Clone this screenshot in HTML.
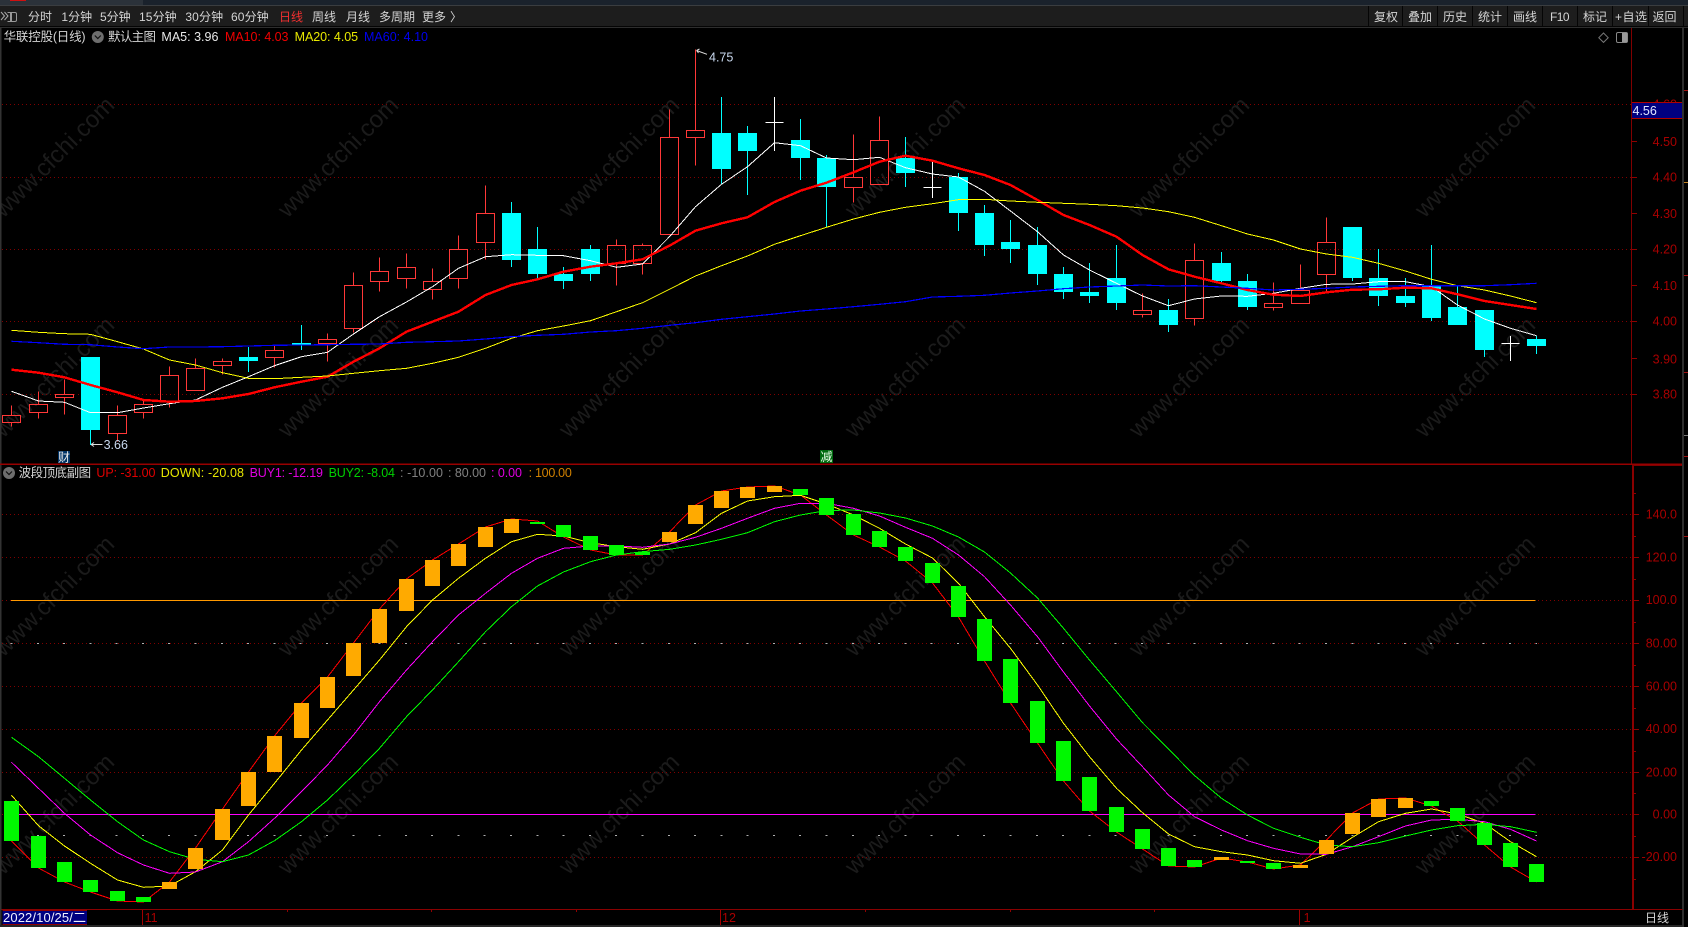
<!DOCTYPE html>
<html><head><meta charset="utf-8"><title>K</title>
<style>html,body{margin:0;padding:0;background:#000;width:1688px;height:927px;overflow:hidden}svg{display:block}text{font-family:"Liberation Sans","Noto Sans CJK SC",sans-serif;font-size:12.5px}.t{font-size:12px;fill:#d4d4d4}.w{font-size:24px;fill:#1b1b1b;text-anchor:middle}.a{fill:#a80000;text-anchor:end;font-size:12.5px}</style></head><body>
<svg width="1688" height="927" viewBox="0 0 1688 927" xmlns="http://www.w3.org/2000/svg" shape-rendering="crispEdges">
<rect width="1688" height="927" fill="#000"/>
<!-- title bar + toolbar -->
<rect width="1688" height="5" fill="#1a222c"/><rect width="143" height="5" fill="#2b323a"/><rect x="10" width="16" height="1" fill="#d01010"/>
<rect y="5" width="1688" height="1" fill="#3a3d40"/><rect y="6" width="1688" height="21" fill="#1d1d1d"/><rect y="26" width="1688" height="1" fill="#050505"/><rect y="27" width="1688" height="1" fill="#2e2e2e"/>
<path d="M1368.5 6V26M1402.5 6V26M1437.5 6V26M1472.5 6V26M1507.5 6V26M1542.5 6V26M1577.5 6V26M1612.5 6V26M1648.5 6V26M1683.5 6V26" stroke="#050505" fill="none"/>
<g shape-rendering="auto"><path d="M7.5 12.5H15a1.5 1.5 0 0 1 1.5 1.5V20a1.5 1.5 0 0 1-1.5 1.5H7.5" fill="none" stroke="#999"/><rect x="10" y="13" width="2" height="8" fill="#999"/><path d="M1 12l3.5 4-3.5 4M4.5 12l3.5 4-3.5 4" fill="none" stroke="#aaa"/></g>
<g class="x">
<text class="t" x="28" y="21" textLength="24">分时</text><text class="t" x="61.4" y="21" textLength="30.7">1分钟</text><text class="t" x="100" y="21" textLength="30.7">5分钟</text><text class="t" x="139" y="21" textLength="37.7">15分钟</text><text class="t" x="185.4" y="21" textLength="37.7">30分钟</text><text class="t" x="231" y="21" textLength="37.7">60分钟</text><text class="t" x="279" y="21" textLength="24" style="fill:#f03030">日线</text><text class="t" x="312" y="21" textLength="24">周线</text><text class="t" x="346" y="21" textLength="24">月线</text><text class="t" x="379" y="21" textLength="36">多周期</text><text class="t" x="422" y="21" textLength="24">更多</text><text class="t" x="450" y="21">〉</text>
<text class="t" x="1374" y="21" textLength="24">复权</text><text class="t" x="1408" y="21" textLength="24">叠加</text><text class="t" x="1443" y="21" textLength="24">历史</text><text class="t" x="1478" y="21" textLength="24">统计</text><text class="t" x="1513" y="21" textLength="24">画线</text><text class="t" x="1550" y="21" textLength="19.6">F10</text><text class="t" x="1583" y="21" textLength="24">标记</text><text class="t" x="1615" y="21" textLength="32">+自选</text><text class="t" x="1652.5" y="21" textLength="24">返回</text>
</g>
<!-- watermark -->
<g shape-rendering="auto">
<text class="w" x="54" y="165" transform="rotate(-45 54 157)">www.cfchi.com</text><text class="w" x="338" y="165" transform="rotate(-45 338 157)">www.cfchi.com</text><text class="w" x="619" y="165" transform="rotate(-45 619 157)">www.cfchi.com</text><text class="w" x="905" y="165" transform="rotate(-45 905 157)">www.cfchi.com</text><text class="w" x="1189" y="165" transform="rotate(-45 1189 157)">www.cfchi.com</text><text class="w" x="1475" y="165" transform="rotate(-45 1475 157)">www.cfchi.com</text>
<text class="w" x="54" y="385" transform="rotate(-45 54 377)">www.cfchi.com</text><text class="w" x="338" y="385" transform="rotate(-45 338 377)">www.cfchi.com</text><text class="w" x="619" y="385" transform="rotate(-45 619 377)">www.cfchi.com</text><text class="w" x="905" y="385" transform="rotate(-45 905 377)">www.cfchi.com</text><text class="w" x="1189" y="385" transform="rotate(-45 1189 377)">www.cfchi.com</text><text class="w" x="1475" y="385" transform="rotate(-45 1475 377)">www.cfchi.com</text>
<text class="w" x="54" y="604" transform="rotate(-45 54 596)">www.cfchi.com</text><text class="w" x="338" y="604" transform="rotate(-45 338 596)">www.cfchi.com</text><text class="w" x="619" y="604" transform="rotate(-45 619 596)">www.cfchi.com</text><text class="w" x="905" y="604" transform="rotate(-45 905 596)">www.cfchi.com</text><text class="w" x="1189" y="604" transform="rotate(-45 1189 596)">www.cfchi.com</text><text class="w" x="1475" y="604" transform="rotate(-45 1475 596)">www.cfchi.com</text>
<text class="w" x="54" y="822" transform="rotate(-45 54 814)">www.cfchi.com</text><text class="w" x="338" y="822" transform="rotate(-45 338 814)">www.cfchi.com</text><text class="w" x="619" y="822" transform="rotate(-45 619 814)">www.cfchi.com</text><text class="w" x="905" y="822" transform="rotate(-45 905 814)">www.cfchi.com</text><text class="w" x="1189" y="822" transform="rotate(-45 1189 814)">www.cfchi.com</text><text class="w" x="1475" y="822" transform="rotate(-45 1475 814)">www.cfchi.com</text>
</g>
<!-- grid -->
<path d="M2 104.5H1631M2 177.5H1631M2 249.5H1631M2 321.5H1631M2 394.5H1631M2 514.5H1631M2 557.5H1631M2 600.5H1631M2 643.5H1631M2 686.5H1631M2 729.5H1631M2 772.5H1631M2 814.5H1631M2 857.5H1631" stroke="#800000" stroke-dasharray="1 3" fill="none"/>
<!-- frame -->
<rect x="0" y="28" width="1.5" height="899" fill="#333"/>
<rect x="1682" y="28" width="2" height="899" fill="#2e2e2e"/>
<path d="M1631.5 28V464" stroke="#800000"/>
<rect x="1632" y="464" width="2" height="445" fill="#8a0000"/>
<rect x="0" y="463.5" width="1682" height="1.5" fill="#980000"/>
<rect x="1632" y="465" width="50" height="1" fill="#800000"/>
<rect x="1.5" y="909" width="1681" height="1" fill="#8a0000"/>
<path d="M1632 104.5h5M1632 141.5h5M1632 177.5h5M1632 213.5h5M1632 249.5h5M1632 285.5h5M1632 321.5h5M1632 358.5h5M1632 394.5h5" stroke="#900000" fill="none"/>
<path d="M1634 514.5h5M1634 557.5h5M1634 600.5h5M1634 643.5h5M1634 686.5h5M1634 729.5h5M1634 772.5h5M1634 814.5h5M1634 857.5h5M1634 536.5h2M1634 579.5h2M1634 622.5h2M1634 665.5h2M1634 708.5h2M1634 751.5h2M1634 793.5h2M1634 836.5h2M1634 879.5h2M1634 493.5h2" stroke="#900000" fill="none"/>
<path d="M1684 90.5h4M1684 275.5h4M1684 372.5h4M1684 456.5h4M1684 536.5h4" stroke="#a01010" fill="none"/><path d="M1684 182.5h4" stroke="#c08020"/><path d="M1684 435.5h4" stroke="#777"/>
<!-- axis labels -->
<text class="a" x="1677" y="108.5">4.60</text><text class="a" x="1677" y="146">4.50</text><text class="a" x="1677" y="181.5">4.40</text><text class="a" x="1677" y="218">4.30</text><text class="a" x="1677" y="253.5">4.20</text><text class="a" x="1677" y="290">4.10</text><text class="a" x="1677" y="325.5">4.00</text><text class="a" x="1677" y="363.5">3.90</text><text class="a" x="1677" y="398.7">3.80</text>
<text class="a" x="1677" y="518.5">140.0</text><text class="a" x="1677" y="561.5">120.0</text><text class="a" x="1677" y="604">100.0</text><text class="a" x="1677" y="647.5">80.00</text><text class="a" x="1677" y="690.5">60.00</text><text class="a" x="1677" y="733">40.00</text><text class="a" x="1677" y="776.5">20.00</text><text class="a" x="1677" y="818.5">0.00</text><text class="a" x="1677" y="861">-20.00</text>
<rect x="1632" y="103" width="50" height="15.5" fill="#000080"/><path d="M1632 102.5h50M1632 118.5h50" stroke="#b00000"/>
<text x="1632.5" y="115" style="fill:#dfe6ff">4.56</text>
<!-- main title -->
<text x="3.6" y="41" textLength="82" style="fill:#d4d4d4">华联控股(日线)</text>
<g shape-rendering="auto"><circle cx="97.8" cy="37" r="6" fill="#6e6e6e"/><path d="M94.8 35.5l3 3 3-3" fill="none" stroke="#111" stroke-width="1.2"/></g>
<text x="108" y="41" textLength="48" style="fill:#d4d4d4">默认主图</text>
<text x="161.4" y="41" textLength="57" style="fill:#e8e8e8">MA5: 3.96</text>
<text x="225" y="41" textLength="63.5" style="fill:#f00000">MA10: 4.03</text>
<text x="294.6" y="41" textLength="63.5" style="fill:#e8e800">MA20: 4.05</text>
<text x="364" y="41" textLength="64" style="fill:#0000f0">MA60: 4.10</text>
<g shape-rendering="auto"><path d="M1603.5 33l4.7 4.7-4.7 4.7-4.7-4.7z" fill="none" stroke="#777"/><rect x="1616.5" y="32.5" width="11" height="10" rx="1.5" fill="none" stroke="#888"/><rect x="1622" y="33" width="5" height="9" fill="#999"/></g>
<!-- candles: red -->
<path fill="none" stroke="#ff3838" d="M11.5 405.5V415.5M11.5 422.5V426.5M2.5 415.5H20.5V422.5H2.5ZM38.5 391.5V404.5M38.5 412.5V418.5M29.5 404.5H47.5V412.5H29.5ZM64.5 379.5V394.5M64.5 397.5V414.5M55.5 394.5H73.5V397.5H55.5ZM117.5 405.5V415.5M117.5 433.5V441.5M108.5 415.5H126.5V433.5H108.5ZM143.5 400.5V404.5M143.5 412.5V418.5M134.5 404.5H152.5V412.5H134.5ZM169.5 366.5V375.5M169.5 401.5V407.5M160.5 375.5H178.5V401.5H160.5ZM195.5 358.5V368.5M186.5 368.5H204.5V390.5H186.5ZM222.5 358.5V361.5M222.5 365.5V374.5M213.5 361.5H231.5V365.5H213.5ZM274.5 344.5V350.5M274.5 357.5V367.5M265.5 350.5H283.5V357.5H265.5ZM327.5 333.5V339.5M327.5 343.5V361.5M318.5 339.5H336.5V343.5H318.5ZM353.5 272.5V285.5M353.5 328.5V332.5M344.5 285.5H362.5V328.5H344.5ZM379.5 257.5V271.5M379.5 281.5V291.5M370.5 271.5H388.5V281.5H370.5ZM406.5 253.5V267.5M406.5 278.5V288.5M397.5 267.5H415.5V278.5H397.5ZM432.5 268.5V281.5M432.5 289.5V299.5M423.5 281.5H441.5V289.5H423.5ZM458.5 235.5V249.5M458.5 278.5V288.5M449.5 249.5H467.5V278.5H449.5ZM485.5 185.5V213.5M485.5 242.5V259.5M476.5 213.5H494.5V242.5H476.5ZM616.5 239.5V245.5M616.5 263.5V285.5M607.5 245.5H625.5V263.5H607.5ZM642.5 243.5V245.5M642.5 263.5V274.5M633.5 245.5H651.5V263.5H633.5ZM669.5 109.5V137.5M660.5 137.5H678.5V234.5H660.5ZM695.5 49.5V130.5M695.5 137.5V165.5M686.5 130.5H704.5V137.5H686.5ZM853.5 134.5V177.5M853.5 187.5V202.5M844.5 177.5H862.5V187.5H844.5ZM879.5 116.5V140.5M870.5 140.5H888.5V184.5H870.5ZM1142.5 293.5V310.5M1142.5 314.5V317.5M1133.5 310.5H1151.5V314.5H1133.5ZM1194.5 243.5V260.5M1194.5 318.5V325.5M1185.5 260.5H1203.5V318.5H1185.5ZM1273.5 282.5V303.5M1273.5 307.5V310.5M1264.5 303.5H1282.5V307.5H1264.5ZM1300.5 264.5V290.5M1291.5 290.5H1309.5V303.5H1291.5ZM1326.5 217.5V242.5M1326.5 274.5V293.5M1317.5 242.5H1335.5V274.5H1317.5Z"/>
<!-- candles: cyan wicks -->
<path fill="none" stroke="#00ffff" d="M90.5 357V445M248.5 347V372M301.5 325V350M511.5 202V267M537.5 227V278M563.5 267V289M590.5 245V281M721.5 97V184M747.5 126V195M800.5 119V180M826.5 155V227M905.5 137V187M958.5 173V231M984.5 205V256M1010.5 220V263M1037.5 227V285M1063.5 267V299M1089.5 263V303M1116.5 245V310M1168.5 299V332M1221.5 252V283M1247.5 274V310M1352.5 227V281M1378.5 249V306M1405.5 278V307M1431.5 245V321M1457.5 286V325M1484.5 310V357M1536.5 336V354"/>
<path fill="#00ffff" d="M81 357h19v73h-19zM239 357h19v4h-19zM292 343h19v2h-19zM502 213h19v47h-19zM528 249h19v25h-19zM554 274h19v7h-19zM581 249h19v25h-19zM712 133h19v36h-19zM738 133h19v18h-19zM791 140h19v18h-19zM817 158h19v29h-19zM896 158h19v15h-19zM949 177h19v36h-19zM975 213h19v32h-19zM1001 242h19v7h-19zM1028 245h19v29h-19zM1054 274h19v18h-19zM1080 292h19v4h-19zM1107 278h19v25h-19zM1159 310h19v15h-19zM1212 263h19v18h-19zM1238 281h19v26h-19zM1343 227h19v51h-19zM1369 278h19v18h-19zM1396 296h19v7h-19zM1422 286h19v32h-19zM1448 307h19v18h-19zM1475 310h19v40h-19zM1527 339h19v7h-19z"/>
<path fill="none" stroke="#fff" d="M774.5 97V151M765.5 122.5H783.5M932.5 162V198M923.5 187.5H941.5M1510.5 336V361M1501.5 343.5H1519.5"/>
<!-- MAs -->
<polyline fill="none" stroke="#fff" stroke-width="1" points="11.5,391.3 38.5,401 64.5,402.3 90.5,412.7 117.5,412.7 143.5,408 169.5,403.7 195.5,400 222.5,387.3 248.5,376.7 274.5,365.7 301.5,356.7 327.5,352.3 353.5,334 379.5,316.7 406.5,302 432.5,286.7 458.5,268.3 485.5,256.7 511.5,254.7 537.5,255.3 563.5,255.7 590.5,260.7 616.5,267.3 642.5,264 669.5,236.7 695.5,206.7 721.5,184.3 747.5,166.7 774.5,142.7 800.5,145.7 826.5,158 853.5,159.7 879.5,157.3 905.5,167.7 932.5,174 958.5,177 984.5,191.3 1010.5,211 1037.5,231.7 1063.5,255 1089.5,270 1116.5,283.3 1142.5,296 1168.5,305.7 1194.5,299 1221.5,296 1247.5,296.3 1273.5,293.3 1300.5,288.3 1326.5,284.3 1352.5,284 1378.5,281.7 1405.5,281.7 1431.5,286.7 1457.5,305 1484.5,319 1510.5,328.3 1536.5,335.7"/>
<polyline fill="none" stroke="#ff0000" stroke-width="2.4" points="11.5,369.7 38.5,372.7 64.5,377.3 90.5,385 117.5,392.3 143.5,400 169.5,401.7 195.5,401 222.5,398.3 248.5,394 274.5,387.3 301.5,381.7 327.5,376.7 353.5,361.7 379.5,348.3 406.5,331.7 432.5,321.7 458.5,311.7 485.5,295 511.5,285 537.5,279.3 563.5,271.7 590.5,266.7 616.5,263.3 642.5,259.3 669.5,245.7 695.5,230.7 721.5,223.3 747.5,217.3 774.5,202 800.5,190.7 826.5,182.7 853.5,172.3 879.5,161.7 905.5,155.7 932.5,160.7 958.5,168.3 984.5,175 1010.5,185 1037.5,200 1063.5,215 1089.5,225 1116.5,236.7 1142.5,255 1168.5,269.3 1194.5,276.7 1221.5,283.3 1247.5,290 1273.5,294.7 1300.5,296 1326.5,292.3 1352.5,289.7 1378.5,289.3 1405.5,287.7 1431.5,288.3 1457.5,294.3 1484.5,301 1510.5,305 1536.5,309"/>
<polyline fill="none" stroke="#ffff00" stroke-width="1" points="11.5,330.3 38.5,332.3 64.5,333.7 90.5,334.3 117.5,341.7 143.5,349 169.5,360 195.5,365 222.5,372.7 248.5,378.3 274.5,378.7 301.5,377.3 327.5,376 353.5,373.3 379.5,370.7 406.5,368.3 432.5,363.3 458.5,357.3 485.5,348.3 511.5,338.3 537.5,330.7 563.5,326 590.5,320.7 616.5,311.7 642.5,302.7 669.5,289.3 695.5,276 721.5,265.7 747.5,256 774.5,244.3 800.5,235.7 826.5,227.3 853.5,219 879.5,212.3 905.5,207.3 932.5,203.7 958.5,199.7 984.5,199.3 1010.5,201 1037.5,202.3 1063.5,203.3 1089.5,204.3 1116.5,205.7 1142.5,208 1168.5,211.7 1194.5,217.3 1221.5,225.7 1247.5,234 1273.5,240 1300.5,249 1326.5,254 1352.5,257.3 1378.5,263.3 1405.5,271 1431.5,279.3 1457.5,285.7 1484.5,290 1510.5,296 1536.5,302.7"/>
<polyline fill="none" stroke="#0000ff" stroke-width="1.2" points="11.5,341.3 38.5,342.7 64.5,344.3 90.5,344.7 117.5,347 143.5,348.7 169.5,347 195.5,347 222.5,346.7 248.5,346 274.5,345.3 301.5,345 327.5,344.7 353.5,344.3 379.5,344 406.5,342.3 432.5,341.7 458.5,341 485.5,339 511.5,336.7 537.5,335.3 563.5,334.3 590.5,332 616.5,330.7 642.5,328.3 669.5,325.3 695.5,322.7 721.5,319.3 747.5,316.7 774.5,314 800.5,311 826.5,309 853.5,306.7 879.5,304.3 905.5,301.7 932.5,297 958.5,296.3 984.5,295.3 1010.5,293 1037.5,291 1063.5,288.7 1089.5,287 1116.5,286 1142.5,285 1168.5,286 1194.5,285.7 1221.5,287 1247.5,288.3 1273.5,290 1300.5,289.3 1326.5,288.3 1352.5,287 1378.5,286.3 1405.5,285.7 1431.5,285.7 1457.5,285.7 1484.5,285.7 1510.5,284.7 1536.5,283.3"/>
<!-- annotations -->
<g shape-rendering="auto"><path d="M696.5 50.5L707 54.3M696.5 50.5l3-1.5M696.5 50.5l2 2.5" fill="none" stroke="#ddd"/><path d="M91 444.5H102.5M91 444.5l3-2M91 444.5l3 2" fill="none" stroke="#ddd"/></g>
<text x="709" y="61.5" style="fill:#c8d8ee">4.75</text>
<text x="103.6" y="449" style="fill:#c8d8ee">3.66</text>
<rect x="58" y="451" width="12" height="12" fill="#003366"/><text x="58" y="461.5" style="font-size:12px;fill:#e8e8e8">财</text>
<rect x="820" y="450" width="13" height="13" fill="#006a10"/><text x="820.5" y="461" style="font-size:12px;fill:#e8ffe8">减</text>
<!-- sub title -->
<g shape-rendering="auto"><circle cx="9" cy="473" r="6" fill="#6e6e6e"/><path d="M6 471.5l3 3 3-3" fill="none" stroke="#111" stroke-width="1.2"/></g>
<text x="18.6" y="477" textLength="72.5" style="fill:#d4d4d4">波段顶底副图</text>
<text x="96.4" y="477" textLength="59" style="fill:#e00000">UP: -31.00</text>
<text x="160.7" y="477" textLength="83.3" style="fill:#e8e800">DOWN: -20.08</text>
<text x="249.6" y="477" textLength="73.4" style="fill:#e000e0">BUY1: -12.19</text>
<text x="328.6" y="477" textLength="66.4" style="fill:#00d000">BUY2: -8.04</text>
<text x="400" y="477" textLength="43" style="fill:#808080">: -10.00</text>
<text x="448" y="477" textLength="38" style="fill:#808080">: 80.00</text>
<text x="491" y="477" textLength="31" style="fill:#e000e0">: 0.00</text>
<text x="528.6" y="477" textLength="43.2" style="fill:#d08000">: 100.00</text>
<!-- sub horizontals -->
<path d="M11 600.5H1535.6" stroke="#ff9900" fill="none"/>
<path d="M11 814.5H1535.6" stroke="#ff00ff" fill="none"/>
<path d="M10.5 643.5H1537M10.5 835.5H1537" stroke="#b0b0b0" stroke-dasharray="2 24.29" fill="none"/>
<!-- sub lines -->
<polyline fill="none" stroke="#ff0000" points="11.5,841 38.5,868 64.5,882 90.5,892 117.5,901 143.5,902 169.5,882 195.5,848 222.5,809 248.5,772 274.5,736 301.5,703 327.5,677 353.5,643 379.5,609 406.5,579 432.5,560 458.5,544 485.5,527 511.5,519 537.5,521 563.5,537 590.5,550 616.5,555 642.5,555 669.5,532 695.5,505 721.5,491 747.5,487 774.5,486 800.5,495 826.5,515 853.5,535 879.5,547 905.5,561 932.5,583 958.5,617 984.5,661 1010.5,703 1037.5,743 1063.5,781 1089.5,811 1116.5,832 1142.5,849 1168.5,866 1194.5,867 1221.5,858 1247.5,862 1273.5,869 1300.5,865 1326.5,840 1352.5,813 1378.5,799 1405.5,798 1431.5,806 1457.5,821 1484.5,845 1510.5,867 1536.5,882"/>
<polyline fill="none" stroke="#ffff00" points="11.5,795.3 38.5,825.7 64.5,846 90.5,863.3 117.5,880 143.5,887.3 169.5,886 195.5,871.7 222.5,850 248.5,815 274.5,783.3 301.5,750 327.5,720 353.5,690 379.5,660 406.5,626.7 432.5,600 458.5,578.3 485.5,558.3 511.5,541.7 537.5,534.3 563.5,536 590.5,542.7 616.5,546.7 642.5,549.3 669.5,544 695.5,532.7 721.5,513.3 747.5,501 774.5,496.7 800.5,495.3 826.5,504 853.5,515 879.5,528.3 905.5,544 932.5,558 958.5,583.3 984.5,616.7 1010.5,648.3 1037.5,685 1063.5,723.3 1089.5,756.7 1116.5,788.3 1142.5,812.7 1168.5,834 1194.5,846.7 1221.5,851.7 1247.5,855 1273.5,860.7 1300.5,863.3 1326.5,854.3 1352.5,837.3 1378.5,821.7 1405.5,813.3 1431.5,809 1457.5,814 1484.5,823.3 1510.5,841.7 1536.5,856.7"/>
<polyline fill="none" stroke="#ff00ff" points="11.5,762.3 38.5,788.3 64.5,813.3 90.5,835 117.5,852.7 143.5,865 169.5,873.3 195.5,872 222.5,861.7 248.5,841.7 274.5,818.3 301.5,791.7 327.5,765 353.5,735 379.5,701.7 406.5,670 432.5,641.7 458.5,615 485.5,593.3 511.5,573.3 537.5,558.3 563.5,548.3 590.5,546 616.5,546 642.5,547.3 669.5,544 695.5,537.3 721.5,528.3 747.5,518.3 774.5,508.3 800.5,503.3 826.5,503.3 853.5,508.3 879.5,516 905.5,527.3 932.5,538.3 958.5,555 984.5,576.7 1010.5,605 1037.5,636.7 1063.5,672 1089.5,706 1116.5,739 1142.5,766.7 1168.5,795 1194.5,816.7 1221.5,830 1247.5,840.7 1273.5,848.3 1300.5,854 1326.5,854.3 1352.5,846.7 1378.5,836.7 1405.5,826 1431.5,820 1457.5,819.3 1484.5,821.7 1510.5,829.3 1536.5,841"/>
<polyline fill="none" stroke="#00ff00" points="11.5,737.3 38.5,756.7 64.5,778.3 90.5,800 117.5,821.7 143.5,840 169.5,851.7 195.5,859.3 222.5,861.7 248.5,855 274.5,840.7 301.5,821.7 327.5,800 353.5,775 379.5,748.3 406.5,716.7 432.5,690 458.5,661.7 485.5,631.7 511.5,606.7 537.5,586 563.5,572 590.5,561.7 616.5,555 642.5,551.7 669.5,549.3 695.5,545 721.5,539.3 747.5,532.7 774.5,521.7 800.5,515 826.5,510.5 853.5,510 879.5,513 905.5,518 932.5,526 958.5,537 984.5,552 1010.5,573 1037.5,598 1063.5,628.3 1089.5,660 1116.5,691.7 1142.5,722.7 1168.5,749 1194.5,775.5 1221.5,798.3 1247.5,815 1273.5,828.3 1300.5,837.3 1326.5,845 1352.5,846.7 1378.5,842.7 1405.5,836 1431.5,830 1457.5,825.7 1484.5,824.3 1510.5,826.7 1536.5,832.3"/>
<!-- sub bars -->
<path fill="#ffaa00" d="M162 882h15v7h-15zM188 848h15v21h-15zM215 809h15v31h-15zM241 772h15v34h-15zM267 736h15v36h-15zM294 703h15v35h-15zM320 677h15v31h-15zM346 643h15v33h-15zM372 609h15v34h-15zM399 579h15v32h-15zM425 560h15v26h-15zM451 544h15v22h-15zM478 527h15v20h-15zM504 519h15v14h-15zM662 532h15v10h-15zM688 505h15v19h-15zM714 491h15v17h-15zM740 487h15v11h-15zM767 486h15v6h-15zM1214 857h15v3h-15zM1293 865h15v3h-15zM1319 840h15v14h-15zM1345 813h15v21h-15zM1371 799h15v18h-15zM1398 798h15v10h-15z"/>
<path fill="#00f800" d="M4 801h15v40h-15zM31 836h15v32h-15zM57 862h15v20h-15zM83 880h15v12h-15zM110 891h15v10h-15zM136 897h15v5h-15zM530 522h15v2h-15zM556 525h15v12h-15zM583 536h15v14h-15zM609 545h15v10h-15zM635 552h15v3h-15zM793 489h15v6h-15zM819 498h15v17h-15zM846 514h15v21h-15zM872 531h15v16h-15zM898 547h15v14h-15zM925 563h15v20h-15zM951 586h15v31h-15zM977 619h15v42h-15zM1003 659h15v44h-15zM1030 701h15v42h-15zM1056 741h15v40h-15zM1082 777h15v34h-15zM1109 807h15v25h-15zM1135 829h15v20h-15zM1161 848h15v18h-15zM1187 860h15v7h-15zM1240 861h15v2h-15zM1266 863h15v6h-15zM1424 801h15v5h-15zM1450 808h15v13h-15zM1477 823h15v22h-15zM1503 843h15v24h-15zM1529 864h15v18h-15z"/>
<!-- date axis -->
<rect x="2.5" y="910" width="84.5" height="15" fill="#000080"/><path d="M2.5 910.5H87M2.5 924.5H87" stroke="#900000"/>
<text x="3" y="922" textLength="83" style="fill:#f0f0ff;font-size:13px">2022/10/25/二</text>
<path d="M142.5 910V925M720.5 910V925M1299.5 910V925" stroke="#a00000"/>
<path d="M287.5 910v2M431.5 910v2M576.5 910v2M865.5 910v2M1010.5 910v2M1154.5 910v2" stroke="#900000"/>
<text x="144.6" y="922" style="fill:#a80000">11</text><text x="722" y="922" style="fill:#a80000">12</text><text x="1303.6" y="922" style="fill:#a80000">1</text>
<text x="1645" y="922" textLength="24" style="fill:#d4d4d4;font-size:12px">日线</text>
<rect x="0" y="925" width="1682" height="2" fill="#262626"/>
</svg>
</body></html>
